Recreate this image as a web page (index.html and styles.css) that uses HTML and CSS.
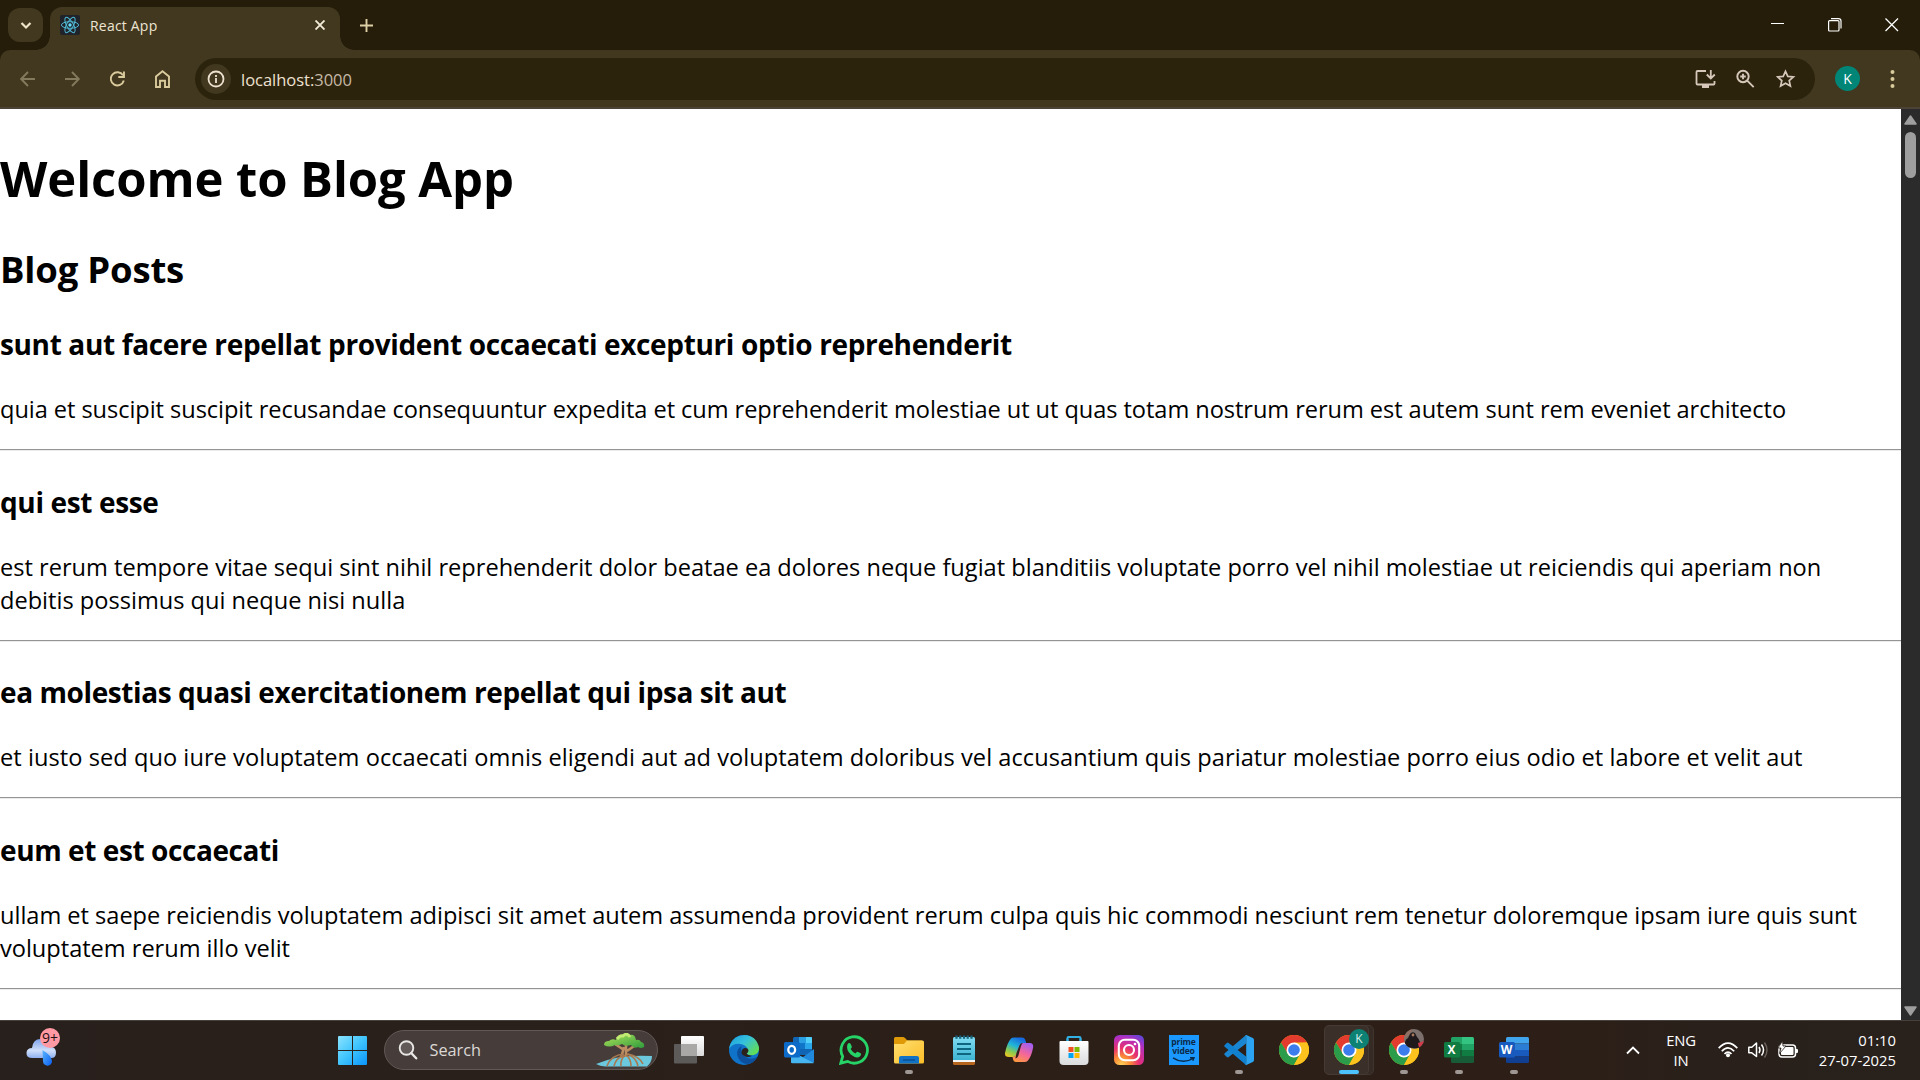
FILE: index.html
```html
<!DOCTYPE html>
<html lang="en">
<head>
<meta charset="utf-8">
<title>React App</title>
<link rel="stylesheet" href="styles.css">
</head>
<body>
<div class="screen">
<header class="tabstrip">
  <button class="tab-search"><svg width="35" height="34" viewBox="0 0 35 34"><path d="M13.500 15l4.500 4.500 4.500-4.500" fill="none" stroke="#eee4c8" stroke-width="2.200"/></svg></button>
  <div class="tab">
    <svg class="favicon" width="20" height="20" viewBox="0 0 20 20"><rect width="20" height="20" rx="2" fill="#20232a"/><g fill="none" stroke="#4fb8d3" stroke-width="1"><ellipse cx="10" cy="10" rx="8.600" ry="3.300"/><ellipse cx="10" cy="10" rx="8.600" ry="3.300" transform="rotate(60 10 10)"/><ellipse cx="10" cy="10" rx="8.600" ry="3.300" transform="rotate(120 10 10)"/></g><circle cx="10" cy="10" r="1.700" fill="#61dafb"/></svg>
    <span class="tab-title">React App</span>
    <svg class="tab-close" width="10" height="10" viewBox="0 0 10 10"><path d="M.5.5l9 9M9.500.5l-9 9" stroke="#f2ead6" stroke-width="1.900"/></svg>
  </div>
  <svg class="new-tab" width="13" height="13" viewBox="0 0 13 13"><path d="M6.500 0v13M0 6.500h13" stroke="#ddd0a6" stroke-width="1.900"/></svg>
  <div class="window-buttons">
    <svg width="14" height="14" viewBox="0 0 14 14"><path d="M0 5.500h13" stroke="#fff"/></svg>
    <svg width="14" height="14" viewBox="0 0 14 14"><path d="M3 .6h7.500q2.500 0 2.500 2.500v7.500" fill="none" stroke="#fff" stroke-width="1.200"/><rect x=".6" y="2.600" width="10.400" height="10.400" rx="1" fill="none" stroke="#fff" stroke-width="1.200"/></svg>
    <svg width="14" height="14" viewBox="0 0 14 14"><path d="M.5.500l12.500 12.500M13 .5L.5 13" stroke="#fff" stroke-width="1.300"/></svg>
  </div>
</header>
<nav class="toolbar">
  <div class="nav-icons">
    <svg width="16" height="16" viewBox="0 0 16 16"><path d="M15 8H1.500M8 1L1.200 8 8 15" fill="none" stroke="#837a5d" stroke-width="1.900"/></svg>
    <svg width="16" height="16" viewBox="0 0 16 16"><path d="M0 8h13.500M7 1l6.800 7L7 15" fill="none" stroke="#837a5d" stroke-width="1.900"/></svg>
    <svg width="16" height="16" viewBox="0 0 16 16"><path d="M13 4.300A6.600 6.600 0 1 0 13.800 9.500M14 .5v5.500H8.300" fill="none" stroke="#dacb9d" stroke-width="1.900"/></svg>
    <svg class="home" width="16" height="18" viewBox="0 0 16 18"><path d="M1 17V6.500L7.500 1.300l6.500 5.200V17h-4v-6.300H5V17z" fill="none" stroke="#dacb9d" stroke-width="1.900"/></svg>
  </div>
  <div class="omnibox">
    <span class="site-info"><svg width="18" height="18" viewBox="0 0 18 18"><circle cx="9" cy="9" r="7.500" fill="none" stroke="#eee1d0" stroke-width="1.800"/><path d="M9 8v5M9 5v1.900" stroke="#eee1d0" stroke-width="1.800"/></svg></span>
    <span class="url">localhost:<span class="port">3000</span></span>
    <div class="omni-icons">
      <svg width="22" height="20" viewBox="0 0 22 20"><path d="M12 2H3.500Q2.500 2 2.500 3v11.500q0 1 1 1h16q1 0 1-1V12M16.800 1v8M12.800 5.500l4 4 4-4" fill="none" stroke="#d5c8bb" stroke-width="1.800"/><path d="M8 15.500h7V19H8z" fill="#d5c8bb"/></svg>
      <svg width="20" height="20" viewBox="0 0 20 20"><circle cx="7" cy="7.500" r="5.700" fill="none" stroke="#d5c8bb" stroke-width="1.900"/><path d="M11.200 11.700l6.500 6.500M7 4.700v5.600M4.200 7.500h5.600" stroke="#d5c8bb" stroke-width="1.900"/></svg>
      <svg width="20" height="20" viewBox="0 0 20 20"><path d="M9.500 2.300l2.300 5.100 5.600.5-4.200 3.700 1.200 5.500-4.900-2.900-4.900 2.900 1.200-5.500L1.600 7.900l5.600-.5z" fill="none" stroke="#d5c8bb" stroke-width="1.700"/></svg>
    </div>
  </div>
  <span class="avatar">K</span>
  <svg class="menu" width="6" height="20" viewBox="0 0 6 20"><g fill="#dacb9d"><circle cx="2.500" cy="3" r="2"/><circle cx="2.500" cy="10" r="2"/><circle cx="2.500" cy="17" r="2"/></g></svg>
</nav>
<div class="viewport">
  <main class="page">
    <h1>Welcome to Blog App</h1>
    <h2>Blog Posts</h2>
    <article><h3>sunt aut facere repellat provident occaecati excepturi optio reprehenderit</h3>
    <p class="tight">quia et suscipit suscipit recusandae consequuntur expedita et cum reprehenderit molestiae ut ut quas totam nostrum rerum est autem sunt rem eveniet architecto</p><hr></article>
    <article><h3>qui est esse</h3>
    <p>est rerum tempore vitae sequi sint nihil reprehenderit dolor beatae ea dolores neque fugiat blanditiis voluptate porro vel nihil molestiae ut reiciendis qui aperiam non<br>debitis possimus qui neque nisi nulla</p><hr></article>
    <article><h3 class="narrow">ea molestias quasi exercitationem repellat qui ipsa sit aut</h3>
    <p class="loose">et iusto sed quo iure voluptatem occaecati omnis eligendi aut ad voluptatem doloribus vel accusantium quis pariatur molestiae porro eius odio et labore et velit aut</p><hr></article>
    <article><h3 class="narrow">eum et est occaecati</h3>
    <p class="snug">ullam et saepe reiciendis voluptatem adipisci sit amet autem assumenda provident rerum culpa quis hic commodi nesciunt rem tenetur doloremque ipsam iure quis sunt<br>voluptatem rerum illo velit</p><hr></article>
  </main>
  <div class="scrollbar">
    <svg width="13" height="10" viewBox="0 0 13 10"><path d="M6.500 1L12 9H1z" fill="#9f9f9f" stroke="#9f9f9f" stroke-width="1.500" stroke-linejoin="round"/></svg>
    <div class="thumb"></div>
    <svg class="down" width="13" height="10" viewBox="0 0 13 10"><path d="M6.500 9L12 1H1z" fill="#9f9f9f" stroke="#9f9f9f" stroke-width="1.500" stroke-linejoin="round"/></svg>
  </div>
</div>
<footer class="taskbar">
  <svg width="0" height="0" class="defs"><defs>
    <linearGradient id="cloud" x2="0" y2="1"><stop stop-color="#7ea3ec"/><stop offset=".6" stop-color="#cfdffa"/><stop offset="1" stop-color="#8fb0ee"/></linearGradient>
    <linearGradient id="drop" x2="1" y2="1"><stop stop-color="#5ab4ff"/><stop offset="1" stop-color="#0a5ff0"/></linearGradient>
    <linearGradient id="win" x2="1" y2="1"><stop stop-color="#8be3ff"/><stop offset=".5" stop-color="#3fc4fd"/><stop offset="1" stop-color="#0a94fa"/></linearGradient>
    <linearGradient id="leaf" x2="1" y2="1"><stop stop-color="#b4e45c"/><stop offset="1" stop-color="#2f9c3c"/></linearGradient>
    <linearGradient id="tv" x2="0" y2="1"><stop stop-color="#fff"/><stop offset="1" stop-color="#dadada"/></linearGradient>
    <linearGradient id="edgeTop" x2="1" y2=".7"><stop stop-color="#1a9bdc"/><stop offset=".5" stop-color="#35c1dc"/><stop offset="1" stop-color="#62dd56"/></linearGradient>
    <linearGradient id="folder" x2="1" y2="1"><stop stop-color="#ffdf70"/><stop offset="1" stop-color="#fbbd28"/></linearGradient>
    <linearGradient id="note" x2="0" y2="1"><stop stop-color="#80dcf2"/><stop offset="1" stop-color="#3db4d2"/></linearGradient>
    <linearGradient id="copA" x1=".6" x2=".1" y2="1"><stop stop-color="#1769e0"/><stop offset=".4" stop-color="#20b4d8"/><stop offset=".7" stop-color="#8acb4f"/><stop offset="1" stop-color="#f7c51c"/></linearGradient>
    <linearGradient id="copB" x1=".7" x2=".2" y2="1"><stop stop-color="#a35ff0"/><stop offset=".5" stop-color="#f3669a"/><stop offset="1" stop-color="#ff9a3e"/></linearGradient>
    <linearGradient id="bag" x2="0" y2="1"><stop stop-color="#fff"/><stop offset="1" stop-color="#d9dbdd"/></linearGradient>
    <radialGradient id="ig" cx=".25" cy="1" r="1.150"><stop stop-color="#ffd35a"/><stop offset=".25" stop-color="#fb8b35"/><stop offset=".5" stop-color="#e8306f"/><stop offset=".8" stop-color="#b32fc0"/><stop offset="1" stop-color="#6246d8"/></radialGradient>
    <symbol id="chrome" viewBox="0 0 30 30"><circle cx="15" cy="15" r="15" fill="#fbbc04"/><path d="M2 7.500A15 15 0 0 1 28 7.500L15 8.200 8.500 18.700z" fill="#e33b2e"/><path d="M2 7.500L8.800 18.800Q11 22 15 22.300L21 19 15 30A15 15 0 0 1 2 7.500z" fill="#2a9c4a"/><path d="M15 7.500H28A15 15 0 0 1 15 30l6.500-11.300z" fill="#fcc31e"/><circle cx="15" cy="15" r="7.500" fill="#fff"/><circle cx="15" cy="15" r="5.800" fill="#3b7ded"/></symbol>
  </defs></svg>
  <div class="weather">
    <svg width="34" height="38" viewBox="0 0 34 38"><path d="M6.500 30Q0 30 .5 24.500 1 20 6 20 7 11 14.500 11 22 11 23 18.500q7 0 7 6T24.500 30z" fill="url(#cloud)"/><path d="M16.500 22Q26 28 26 33a4.500 4.500 0 0 1-9 .5z" fill="url(#drop)"/></svg>
    <span class="weather-badge">9+</span>
  </div>
  <svg class="start" width="29" height="29" viewBox="0 0 29 29"><path d="M0 1q0-1 1-1h13v14H0zM15 0h13q1 0 1 1v13H15zM0 15h14v14H1q-1 0-1-1zM15 15h14v13q0 1-1 1H15z" fill="url(#win)"/></svg>
  <div class="search">
    <svg width="20" height="20" viewBox="0 0 20 20"><circle cx="8.500" cy="8" r="6.800" fill="#625a58" stroke="#e8e6e5" stroke-width="1.900"/><path d="M13.200 13l5 5.300" stroke="#e8e6e5" stroke-width="2.400" stroke-linecap="round"/></svg>
    <span>Search</span>
    <svg class="tree" width="57" height="34" viewBox="0 0 57 34"><path d="M0 31Q22 21 56 23q0 6-5 10.500H9Q4 33 0 31z" fill="#6cc8dc"/><path d="M25 25L28 14M28 17l-9-6M31 18l10-7M30 9v15" fill="none" stroke="#bd8e62" stroke-width="2.600"/><g fill="none" stroke="#a87950" stroke-width="1.600"><path d="M28 21Q15 22 11 33M28 22Q20 25 18 33M29 22Q24 27 25 33M30 22q5 4 5 11M31 21q9 3 11 12M32 21q11 2 15 10"/></g><path d="M8 12q0-4 5-4 3-3 7-1 1-5 6-5 4-3 8 0 5-1 6 5 4-1 5 2 4 1 3 5-3 2-6 0-4 2-7-2-6 2-9-1-4 2-7 1-6 3-11 0z" fill="url(#leaf)"/><path d="M21 6q3-4 6-3 4-4 7 1" stroke="#c2ea72" fill="none" stroke-width="3"/></svg>
  </div>
  <div class="apps">
    <span class="app"><svg width="30" height="30" viewBox="0 0 30 30"><rect y="9" width="23" height="19.500" rx="1" fill="#5d5b5a"/><rect x="7" y="1" width="23" height="20" rx="1" fill="url(#tv)"/><path d="M7 9h16v12H7z" fill="#a9a8a7"/></svg></span>
    <span class="app"><svg width="30" height="30" viewBox="0 0 30 30"><circle cx="15" cy="15" r="15" fill="#1073ca"/><path d="M1 10Q5 0 15.500 0 27 .3 30 12.500q.5 6-5.500 7.500-5 .6-7-1.500 3-3.200 0-6.500Q13 7.800 6.500 9 2.500 10 0 14z" fill="url(#edgeTop)"/><path d="M12.500 11Q6 15 9 22.500q4 8 12 6 4-1 7.500-7Q22 26 16 21.500q-5-4-3.500-10.500z" fill="#0c4f9c"/><path d="M12.500 17.500q0-4 3.500-4.500 3.300 0 3.500 3-.3 1.400-1.800 2.500 1 2 5.300 2.300-3 2.200-6.500.7-4-1.700-4-4z" fill="#2b201b"/></svg></span>
    <span class="app"><svg width="30" height="30" viewBox="0 0 30 30"><rect x="9" y="2" width="19" height="18" rx="1.500" fill="#1066b5"/><path d="M15 2h13v6H15z" fill="#2a9fe4"/><path d="M22 2h4.500Q28 2 28 3.500V8h-6z" fill="#52d0f9"/><path d="M15 8h6v6h-6z" fill="#1276c8"/><path d="M21 8h7v6h-7z" fill="#2aa7ea"/><path d="M7 27V17l12 5 11-8v12.500Q30 28 28.500 28H8.500Q7 28 7 27z" fill="#2089db"/><path d="M7 16.500L30 28l-1 .3H8.500Q7 28.300 7 27z" fill="#47b5f0"/><rect y="7" width="16" height="15.500" rx="1.500" fill="#0c6ac8"/><ellipse cx="7.700" cy="14.800" rx="3.400" ry="4" fill="none" stroke="#fff" stroke-width="2.300"/></svg></span>
    <span class="app"><svg width="30" height="30" viewBox="0 0 30 30"><path d="M1.800 28.200l1.900-6.800A13.200 13.200 0 1 1 8.600 26.400z" fill="none" stroke="#25d366" stroke-width="2.800"/><path d="M8.400 9.500q1.300-2 3-1.100l1.500 3.400q.1 1-1.300 2.200 1.700 3 4.900 4.500 1.200-1.900 2.200-1.700l3.300 1.700q.3 3.200-3.400 4-3 .3-6.800-2.900Q6.800 14.600 8.400 9.500z" fill="#25d366"/></svg></span>
    <span class="app"><svg width="30" height="30" viewBox="0 0 30 30"><path d="M0 3.500Q0 2 1.500 2H9q1 0 2 1l2.500 2.500H28V12H0z" fill="#e09a08"/><path d="M0 9h10l3-3.500h15.500Q30 5.500 30 7v20q0 1.500-1.500 1.500h-27Q0 28.500 0 27z" fill="url(#folder)"/><path d="M5 28.500V23q0-2 2-2h16q2 0 2 2v5.500z" fill="#1272c6"/><path d="M9 25h12" stroke="#0a4f93" stroke-width="1.500"/></svg><i class="dot"></i></span>
    <span class="app"><svg width="30" height="30" viewBox="0 0 30 30"><path d="M4 24h22v4.500q0 1.500-1.500 1.500h-19Q4 30 4 28.500z" fill="#b5651e"/><path d="M4 24h22v3H4z" fill="#f4f4f4"/><path d="M4 3.500Q4 2 5.500 2h19Q26 2 26 3.500V25H4z" fill="url(#note)"/><path d="M7.500.5v3.200M11.200.5v3.200M15 .5v3.200M18.700.5v3.200M22.500.5v3.200" stroke="#17617b" stroke-width="2.200"/><path d="M8 9h14M8 14h14M8 19h14" stroke="#0e6580" stroke-width="1.900"/></svg></span>
    <span class="app"><svg width="30" height="30" viewBox="0 0 30 30"><path d="M7 3.500Q8 2.500 10 2.500h8q2.500 0 3.500 3l.7 2.500h-3q-2.500 0-3.500 3L13 18q-1 4-4 4H5q-4.500 0-4-4Q3 8 7 3.500z" fill="url(#copA)"/><path d="M22.500 8H26q4 .5 3 5-1.500 8-5 12.500-1.500 1.500-3.500 1.500H12q-2.500 0-3-3l-.5-2q3 0 4-4l2.700-7q1-3 3.800-3z" fill="url(#copB)"/><path d="M12.500 18l2.700-7q1-3 3.600-3-1.300 1-2.100 4l-2.300 8.500q-.8 2.500-3 3z" fill="#30221c"/></svg></span>
    <span class="app"><svg width="30" height="30" viewBox="0 0 30 30"><path d="M8.500 7V3Q8.500 2 9.500 2h11q1 0 1 1v4" fill="none" stroke="#32b1e4" stroke-width="2"/><path d="M.5 7q0-1 1-1h27q1 0 1 1v19q0 4-4 4h-21q-4 0-4-4z" fill="url(#bag)"/><path d="M9.500 12H14.500v5h-5z" fill="#f25022"/><path d="M15.500 12h5v5h-5z" fill="#7fba00"/><path d="M9.500 18h5v5h-5z" fill="#00a4ef"/><path d="M15.500 18h5v5h-5z" fill="#ffb900"/><path d="M8.500 6V3.500M21.500 6V3.500" stroke="#32b1e4" stroke-width="2"/></svg></span>
    <span class="app"><svg width="30" height="30" viewBox="0 0 30 30"><rect width="30" height="30" rx="5.500" fill="url(#ig)"/><rect x="4.800" y="4.800" width="20.400" height="20.400" rx="6" fill="none" stroke="#fff" stroke-width="2.100"/><circle cx="15" cy="15" r="5" fill="none" stroke="#fff" stroke-width="2.100"/><circle cx="21" cy="9" r="1.300" fill="#fff"/></svg></span>
    <span class="app"><span class="prime"><span>prime</span><span>video</span><svg width="24" height="6" viewBox="0 0 24 6"><path d="M1 .8Q11 7.500 21 1.500M18 .8h4l-1.200 3" fill="none" stroke="#0c2a48" stroke-width="1.400"/></svg></span></span>
    <span class="app"><svg width="30" height="30" viewBox="0 0 30 30"><path d="M22 0v8.500L4 22.500 2.800 22 .5 19.800q-.6-.8.200-1.600z" fill="#1a86d2"/><path d="M2.800 8L4 7.500l18 14V30L.7 11.800q-.8-.8-.2-1.600z" fill="#1080cf"/><path d="M21 .6L22.300 0l6.500 3Q30 3.600 30 5v20q0 1.400-1.200 2L22.300 30 21 29.400q1.200.4 1.200-1.400V2q0-1.800-1.200-1.400z" fill="#2ba3f0"/></svg><i class="dot"></i></span>
    <span class="app"><svg width="30" height="30"><use href="#chrome"/></svg></span>
    <span class="app"><span class="stack"></span><span class="plate"></span><svg class="front" width="30" height="30"><use href="#chrome"/></svg><span class="profile">K</span><i class="dot active"></i></span>
    <span class="app"><svg width="30" height="30"><use href="#chrome"/></svg><svg class="photo" width="20" height="20" viewBox="0 0 20 20"><clipPath id="pc"><circle cx="10" cy="10" r="10"/></clipPath><g clip-path="url(#pc)"><path d="M0 0h20v20H0z" fill="#7c706c"/><path d="M0 0h9L5 6 0 10z" fill="#8f6f62"/><path d="M1 18q-1-7 3-9l2-4q2-3 5-1l2 4q4 3 3 12z" fill="#20191b"/><path d="M14 14l6-2v6l-5 1z" fill="#d23a48"/><circle cx="9" cy="6" r="1.400" fill="#a87a60"/></g></svg><i class="dot"></i></span>
    <span class="app"><svg width="30" height="30" viewBox="0 0 30 30"><path d="M7 3.500Q7 2 8.500 2H18v7H7z" fill="#21a366"/><path d="M18 2h10.500Q30 2 30 3.500V9H18z" fill="#33c481"/><path d="M7 9h11v6H7z" fill="#107c41"/><path d="M18 9h12v6H18z" fill="#21a366"/><path d="M7 15h23v11.500q0 1.500-1.500 1.500h-20Q7 28 7 26.500z" fill="#185c37"/><path d="M18 15h12v6H18z" fill="#107c41"/><rect y="7" width="16" height="15.500" rx="1.500" fill="#107c41"/></svg><b class="office">X</b><i class="dot"></i></span>
    <span class="app"><svg width="30" height="30" viewBox="0 0 30 30"><path d="M7 8.500v-5Q7 2 8.500 2h20Q30 2 30 3.500v5z" fill="#41a5ee"/><path d="M7 8.500h23V15H7z" fill="#2b7cd3"/><path d="M7 15h23v6.500H7z" fill="#185abd"/><path d="M7 21.500h23v5q0 1.500-1.500 1.500h-20Q7 28 7 26.500z" fill="#103f91"/><rect y="7" width="16" height="15.500" rx="1.500" fill="#185abd"/></svg><b class="office">W</b><i class="dot"></i></span>
  </div>
  <div class="tray">
    <svg width="14" height="9" viewBox="0 0 14 9"><path d="M1 7.500L7 1.500l6 6" fill="none" stroke="#fff" stroke-width="1.800"/></svg>
    <div class="lang"><span>ENG</span><span>IN</span></div>
    <div class="status">
      <svg width="20" height="16" viewBox="0 0 20 16"><g fill="none" stroke="#fff" stroke-width="1.700"><path d="M.7 6.200Q10-3.800 19.300 6.200"/><path d="M3.800 9.200Q10 2.400 16.200 9.200"/><path d="M6.500 12Q10 8.200 13.500 12"/></g><circle cx="10" cy="13.300" r="2" fill="#fff"/></svg>
      <svg width="20" height="18" viewBox="0 0 20 18"><path d="M.8 6.200h3L8.500 2v13.500L3.800 11.800h-3z" fill="none" stroke="#fff" stroke-width="1.500" stroke-linejoin="round"/><path d="M11 6q2 3 0 6M13.500 3.500q4 5.500 0 11" fill="none" stroke="#fff" stroke-width="1.500"/><path d="M16.500 1.500q5 7.500 0 15" fill="none" stroke="#6b625d" stroke-width="1.400"/></svg>
      <svg width="21" height="18" viewBox="0 0 21 18"><rect x="1" y="4" width="16.500" height="12" rx="3" fill="none" stroke="#fff" stroke-width="1.500"/><rect x="3" y="6" width="12.500" height="8" rx="1" fill="#fff"/><path d="M18 8h1q1 0 1 1v2q0 1-1 1h-1z" fill="#fff"/><path d="M4.500 0L0 7h3l-1.500 5.500L8 5H5z" fill="#fff" stroke="#2a211b" stroke-width=".8"/></svg>
    </div>
    <div class="clock"><span>01:10</span><span>27-07-2025</span></div>
  </div>
</footer>
</div>
</body>
</html>
```
FILE: styles.css
```css
* { box-sizing: border-box; }
body { margin: 0; font-family: "Open Sans", "Noto Sans", sans-serif; }
svg { display: block; flex: none; }
button { border: 0; padding: 0; }
.screen { width: 1920px; height: 1080px; overflow: hidden; display: flex; flex-direction: column; background: #251d09; }

/* Browser frame */
.tabstrip { height: 50px; flex: none; display: flex; padding-left: 8px; }
.tab-search { width: 35px; height: 34px; margin-top: 8px; border-radius: 12px; background: #41381f; }
.tab { position: relative; width: 290px; height: 43px; margin: 7px 0 0 7px; padding: 0 15px 0 10px; display: flex; align-items: flex-start; background: #41381f; border-radius: 12px 12px 0 0; }
.tab::before, .tab::after { content: ""; position: absolute; bottom: 0; width: 14px; height: 14px; }
.tab::before { left: -14px; background: radial-gradient(circle at 0 0, transparent 13.5px, #41381f 14px); }
.tab::after { right: -14px; background: radial-gradient(circle at 100% 0, transparent 13.5px, #41381f 14px); }
.favicon { margin-top: 8px; }
.tab-title { margin: 9px auto 0 10px; font-size: 14px; letter-spacing: .2px; line-height: 20px; color: #eee4d2; }
.tab-close { margin-top: 13px; }
.new-tab { margin: 19px 0 0 19.500px; }
.window-buttons { margin: 18px 21px 0 auto; display: flex; gap: 43px; }
.toolbar { height: 59px; flex: none; display: flex; background: #41381f; border-bottom: 2px solid #4c4336; border-radius: 10px 10px 0 0; }
.nav-icons { display: flex; gap: 29px; padding: 21px 0 0 20px; }
.home { margin-top: -1px; }
.omnibox { width: 1620px; height: 42px; margin: 8px 0 0 24px; padding: 0 19px 0 6px; display: flex; align-items: center; background: #2c230d; border-radius: 21px; }
.site-info { width: 30px; height: 30px; border-radius: 50%; background: #41381f; display: grid; place-items: center; }
.url { margin-left: 10px; font-size: 16.500px; letter-spacing: -.02px; color: #eee1d0; }
.port { color: #c6b9a6; }
.omni-icons { display: flex; gap: 20px; margin-left: auto; }
.avatar { width: 25px; height: 25px; margin: 16px 0 0 20px; border-radius: 50%; background: #008577; color: #fff; font-size: 14px; line-height: 25px; text-align: center; }
.menu { margin: 19px 0 0 30px; }

/* Blog page */
.viewport { height: 911px; flex: none; display: flex; overflow: hidden; background: #fff; }
.page { width: 1901px; font-size: 23.600px; color: #000; overflow: hidden; white-space: nowrap; }
h1 { font-size: 49px; line-height: 67px; letter-spacing: -.08px; margin: 35.900px 0 0; }
h2 { font-size: 36.500px; line-height: 50px; letter-spacing: -.2px; margin: 32px 0 0; }
h3 { font-size: 28px; line-height: 39px; letter-spacing: -.36px; margin: 31.400px 0 0; }
.narrow { letter-spacing: -.41px; }
p { line-height: 33px; margin: 29px 0 0; }
.tight { letter-spacing: -.058px; }
.snug { letter-spacing: -.02px; }
.loose { letter-spacing: .053px; }
hr { height: 2px; margin: 23.100px 0 0; border: 0; border-top: 1px solid #949494; border-bottom: 1px solid #ececec; }
.scrollbar { width: 19px; background: #2b2b2b; display: flex; flex-direction: column; align-items: center; padding: 6px 0 4px; }
.thumb { width: 11px; height: 46px; margin-top: 7px; border-radius: 6px; background: #9f9f9f; }
.down { margin-top: auto; }

/* Taskbar */
.taskbar { height: 60px; flex: none; display: flex; align-items: center; padding-bottom: 1px; border-top: 1px solid #46413c; background: linear-gradient(90deg, #28201c, #2a201b 25%, #2b1f18 50%, #2d1f17 80%, #29201b 90%, #28211c); color: #fff; }
.defs { position: absolute; }
.weather { position: relative; width: 34px; height: 38px; margin: -6px 0 0 26px; }
.weather-badge { position: absolute; left: 14px; top: 0; width: 20px; height: 20px; border-radius: 50%; background: #ff99a4; color: #1c1012; font-size: 14px; line-height: 20px; text-align: center; }
.start { margin-left: 278px; }
.search { width: 274px; height: 40px; margin-left: 17px; padding: 0 4px 0 13px; display: flex; align-items: center; border: 1px solid #625855; border-radius: 20px; background: #463d3a; }
.search span { margin-left: 11.500px; font-size: 16.300px; color: #dcd8d6; }
.tree { margin-left: auto; }
.apps { display: flex; margin-left: 3px; }
.app { position: relative; width: 55px; height: 50px; display: grid; place-items: center; }
.dot { position: absolute; bottom: 1px; left: 24px; width: 8px; height: 4px; border-radius: 2px; background: #9f9793; }
.dot.active { left: 18px; width: 20px; background: #4cc2ff; }
.plate { position: absolute; left: 3px; top: 0; width: 45px; height: 50px; border: 1px solid #453a34; border-radius: 5px; background: #3a2f29; }
.stack { position: absolute; left: 18px; top: 0; width: 35px; height: 50px; border: 1px solid #3f342e; border-radius: 5px; background: #352a24; }
.front { position: relative; }
.profile { position: absolute; left: 28px; top: 4px; width: 20px; height: 20px; border-radius: 50%; background: #0c8174; color: #d7efeb; font-size: 12px; line-height: 20px; text-align: center; }
.photo { position: absolute; left: 28px; top: 4px; }
.office { position: absolute; left: 12.500px; top: 17px; width: 16px; font-size: 12px; line-height: 16px; text-align: center; }
.prime { width: 30px; height: 30px; padding-top: 3px; display: flex; flex-direction: column; align-items: center; background: #1a98ff; color: #0c2a48; font-weight: 700; font-size: 8.600px; line-height: 8.500px; letter-spacing: -.2px; }
.prime svg { margin-top: 2px; }
.tray { margin-left: auto; padding-right: 24px; display: flex; align-items: center; font-size: 14.800px; line-height: 20px; }
.lang { width: 32px; margin-left: 25px; display: flex; flex-direction: column; align-items: center; letter-spacing: -.2px; }
.status { display: flex; align-items: center; gap: 10px; margin-left: 21px; }
.clock { width: 79px; margin-left: 18px; display: flex; flex-direction: column; align-items: flex-end; }
```
